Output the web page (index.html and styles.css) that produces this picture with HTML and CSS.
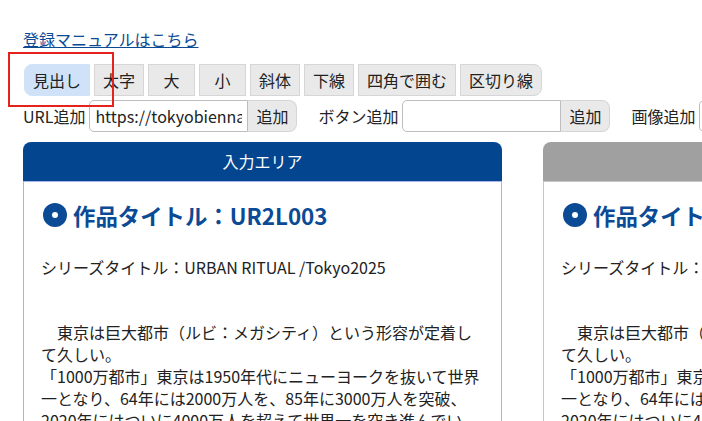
FILE: index.html
```html
<!DOCTYPE html>
<html lang="ja">
<head>
    <meta charset="UTF-8">
    <title>作品登録</title>
    <link rel="stylesheet" href="styles.css">
</head>
<body>
    <div class="page">
        <a href="#" class="manual-link">登録マニュアルはこちら</a>

        <div class="toolbar">
            <button class="tool-btn active">見出し</button>
            <button class="tool-btn">太字</button>
            <button class="tool-btn">大</button>
            <button class="tool-btn">小</button>
            <button class="tool-btn">斜体</button>
            <button class="tool-btn">下線</button>
            <button class="tool-btn">四角で囲む</button>
            <button class="tool-btn last">区切り線</button>
        </div>
        <div class="highlight-box"></div>

        <div class="add-row">
            <span class="add-label">URL追加</span>
            <input type="text" class="add-input" value="https://tokyobiennale.jp/">
            <button class="add-btn">追加</button>

            <span class="add-label spaced">ボタン追加</span>
            <input type="text" class="add-input" value="">
            <button class="add-btn">追加</button>

            <span class="add-label spaced">画像追加</span>
            <input type="text" class="add-input" value="">
        </div>

        <div class="panels">
            <div class="panel">
                <div class="panel-header">入力エリア</div>
                <div class="panel-body">
                    <h2 class="work-title">
                        <svg class="title-icon" viewBox="0 0 24 24" width="24" height="24">
                            <circle cx="12" cy="12" r="12" fill="#0b4a94"/>
                            <circle cx="12" cy="12" r="3" fill="#fff"/>
                        </svg>
                        作品タイトル：UR2L003
                    </h2>
                    <p class="series">シリーズタイトル：URBAN RITUAL /Tokyo2025</p>
                    <p class="work-text">　東京は巨大都市（ルビ：メガシティ）という形容が定着して久しい。<br>「1000万都市」東京は1950年代にニューヨークを抜いて世界一となり、64年には2000万人を、85年に3000万人を突破、2020年にはついに4000万人を超えて世界一を突き進んでいる。</p>
                </div>
            </div>

            <div class="panel preview">
                <div class="panel-header"></div>
                <div class="panel-body">
                    <h2 class="work-title">
                        <svg class="title-icon" viewBox="0 0 24 24" width="24" height="24">
                            <circle cx="12" cy="12" r="12" fill="#0b4a94"/>
                            <circle cx="12" cy="12" r="3" fill="#fff"/>
                        </svg>
                        作品タイトル：UR2L003
                    </h2>
                    <p class="series">シリーズタイトル：URBAN RITUAL /Tokyo2025</p>
                    <p class="work-text">　東京は巨大都市（ルビ：メガシティ）という形容が定着して久しい。<br>「1000万都市」東京は1950年代にニューヨークを抜いて世界一となり、64年には2000万人を、85年に3000万人を突破、2020年にはついに4000万人を超えて世界一を突き進んでいる。</p>
                </div>
            </div>
        </div>
    </div>
</body>
</html>
```

FILE: styles.css
```css
body {
    margin: 0;
    font-family: "Noto Sans CJK JP", "Noto Sans", sans-serif;
    font-size: 16px;
    line-height: 22px;
    color: #222;
    background-color: #fff;
    overflow: hidden;
}
.page {
    position: relative;
    padding: 28px 0 0 23px;
}
.manual-link {
    display: inline-block;
    color: #0b4a94;
    text-decoration: underline;
    margin-bottom: 14px;
}
.toolbar {
    display: flex;
    gap: 4px;
    height: 32px;
    padding-left: 1px;
}
.tool-btn {
    font-family: inherit;
    font-size: 16px;
    color: #222;
    min-width: 47px;
    padding: 0 8px;
    background-color: #e9e9e9;
    border: 1px solid #d6d6d6;
    border-radius: 0;
}
.tool-btn.active {
    background-color: #cfe2f8;
    border-color: #cfe2f8;
    border-radius: 8px 0 0 8px;
}
.tool-btn.last {
    border-radius: 0 8px 8px 0;
}
.highlight-box {
    position: absolute;
    left: 8px;
    top: 52px;
    width: 106px;
    height: 55px;
    box-sizing: border-box;
    border: 2px solid #e5221b;
}
.add-row {
    display: flex;
    align-items: center;
    margin-top: 4px;
    height: 32px;
    white-space: nowrap;
}
.add-label {
    margin-right: 4px;
}
.add-label.spaced {
    margin-left: 21px;
}
.add-input {
    flex: 0 0 159px;
    width: 159px;
    min-width: 0;
    box-sizing: border-box;
    height: 32px;
    font-family: inherit;
    font-size: 16px;
    color: #222;
    padding: 0 5px;
    border: 1px solid #bdbdbd;
    border-radius: 5px 0 0 5px;
    outline: none;
}
.add-btn {
    flex: 0 0 auto;
    height: 32px;
    font-family: inherit;
    font-size: 16px;
    color: #222;
    padding: 0 8px;
    background-color: #e9e9e9;
    border: 1px solid #d6d6d6;
    border-left: none;
    border-radius: 0 8px 8px 0;
}
.panels {
    display: flex;
    gap: 41px;
    margin-top: 10px;
}
.panel {
    flex: 0 0 479px;
}
.panel-header {
    height: 39px;
    line-height: 39px;
    text-align: center;
    color: #fff;
    background-color: #03458f;
    border-radius: 8px 8px 0 0;
}
.panel-body {
    border: 1px solid #aab0ea;
    padding: 17px 17px 40px;
    height: 400px;
}
.preview .panel-header {
    background-color: #a0a0a0;
}
.preview .panel-body {
    border-color: #c6c6c6;
}
.work-title {
    display: flex;
    align-items: center;
    gap: 6px;
    margin: -1px 0 24px 2px;
    font-size: 22.4px;
    line-height: 34px;
    font-weight: bold;
    color: #0b4a94;
}
.title-icon {
    flex: 0 0 auto;
}
.series {
    margin: 0 0 43px;
}
.work-text {
    margin: 0;
    width: 443px;
}
```
